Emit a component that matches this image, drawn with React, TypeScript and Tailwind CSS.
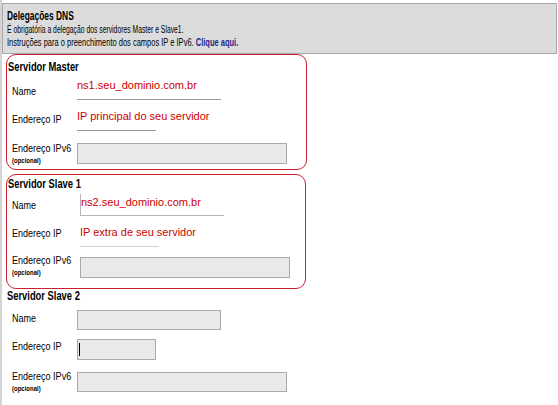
import React from "react";

const AF = "font-['Liberation_Sans',Arial,sans-serif]";

function Sx({ children, s = "scale-x-[0.82]" }: { children: React.ReactNode; s?: string }) {
  return <span className={`inline-block origin-left whitespace-nowrap ${s}`}>{children}</span>;
}

function Label({ text, opcional, mt, w }: { text: string; opcional?: boolean; mt: number; w: string }) {
  return (
    <div className={`${w} shrink-0`} style={{ marginTop: mt }}>
      <div className="text-[11px] leading-[13px] text-black h-[13px]">
        <Sx>{text}</Sx>
      </div>
      {opcional && (
        <div className="text-[8px] leading-[9px] h-[9px] mt-[1px] text-black font-bold">
          <Sx s="scale-x-[0.75]">(opcional)</Sx>
        </div>
      )}
    </div>
  );
}

function Row({ h, children }: { h: number; children: React.ReactNode }) {
  return (
    <div className="flex items-start" style={{ height: h }}>
      {children}
    </div>
  );
}

function GrayInput({ w, h, mt, cursor }: { w: string; h: number; mt: number; cursor?: boolean }) {
  return (
    <div
      className={`${w} border border-[#a9a9a9] bg-[#e9e9e9] flex items-center pl-[1px]`}
      style={{ height: h, marginTop: mt }}
    >
      {cursor && <div className="w-[1px] h-[13px] bg-black" />}
    </div>
  );
}

function Heading({ text, cls }: { text: string; cls: string }) {
  return (
    <div className={`${cls} text-[12px] leading-[14px] h-[14px] font-bold text-black`}>
      <Sx s="scale-x-[0.78]">{text}</Sx>
    </div>
  );
}

export default function App() {
  return (
    <div className={`w-[558px] h-[405px] bg-white overflow-hidden border-l-2 border-[#d4d4d4] ${AF}`}>
      {/* Header */}
      <div className="mt-[3px] w-[555px] h-[51px] border border-[#a8a8a8] bg-[#dcdcdc] pl-[4px] pt-[6px]">
        <div className="text-[12px] leading-[13px] h-[13px] font-bold text-black">
          <Sx s="scale-x-[0.7]">Delegações DNS</Sx>
        </div>
        <div className="text-[10px] leading-[13px] h-[13px] text-black">
          <Sx s="scale-x-[0.68]">É obrigatória a delegação dos servidores Master e Slave1.</Sx>
        </div>
        <div className="text-[10px] leading-[13px] h-[13px] text-black">
          <Sx s="scale-x-[0.75]">
            Instruções para o preenchimento dos campos IP e IPv6.{" "}
            <span className="text-[#1b1f8a] font-bold">Clique aqui.</span>
          </Sx>
        </div>
      </div>

      {/* Servidor Master */}
      <div className="ml-[4px] w-[301px] h-[116px] rounded-[10px] border border-[#c8202c]">
        <Heading text="Servidor Master" cls="pl-[1px] mt-[5px]" />
        <div className="pl-[5px]">
          <Row h={27}>
            <Label text="Name" mt={11} w="w-[65px]" />
            <div className="w-[144px] h-[21px] border-b border-[#9a9a9a] mt-[5px] text-[11px] leading-[13px] text-[#cc0000] whitespace-nowrap">
              ns1.seu_dominio.com.br
            </div>
          </Row>
          <Row h={30}>
            <Label text="Endereço IP" mt={12} w="w-[65px]" />
            <div className="w-[79px] h-[21px] border-b border-[#9a9a9a] mt-[9px] text-[11px] leading-[13px] text-[#cc0000] whitespace-nowrap">
              IP principal do seu servidor
            </div>
          </Row>
          <Row h={34}>
            <Label text="Endereço IPv6" opcional mt={11} w="w-[65px]" />
            <GrayInput w="w-[210px]" h={21} mt={12} />
          </Row>
        </div>
      </div>

      {/* Servidor Slave 1 */}
      <div className="ml-[4px] mt-[4px] w-[300px] h-[115px] rounded-[10px] border border-[#c8202c]">
        <Heading text="Servidor Slave 1" cls="pl-[1px] mt-[2px]" />
        <div className="pl-[5px]">
          <Row h={25}>
            <Label text="Name" mt={8} w="w-[68px]" />
            <div className="w-[144px] h-[22px] border-l border-b border-[#b5b5b5] mt-[3px] pt-[2px] text-[11px] leading-[13px] text-[#cc0000] whitespace-nowrap">
              ns2.seu_dominio.com.br
            </div>
          </Row>
          <Row h={31}>
            <Label text="Endereço IP" mt={11} w="w-[68px]" />
            <div className="w-[79px] h-[21px] border-b border-[#d2d2d2] mt-[10px] text-[11px] leading-[13px] text-[#cc0000] whitespace-nowrap">
              IP extra de seu servidor
            </div>
          </Row>
          <Row h={34}>
            <Label text="Endereço IPv6" opcional mt={7} w="w-[68px]" />
            <GrayInput w="w-[210px]" h={21} mt={10} />
          </Row>
        </div>
      </div>

      {/* Servidor Slave 2 */}
      <div>
        <Heading text="Servidor Slave 2" cls="pl-[5px] mt-[0px]" />
        <div className="pl-[10px]">
          <Row h={27}>
            <Label text="Name" mt={9} w="w-[65px]" />
            <GrayInput w="w-[144px]" h={20} mt={7} />
          </Row>
          <Row h={30}>
            <Label text="Endereço IP" mt={10} w="w-[65px]" />
            <GrayInput w="w-[79px]" h={21} mt={9} cursor />
          </Row>
          <Row h={34}>
            <Label text="Endereço IPv6" opcional mt={10} w="w-[65px]" />
            <GrayInput w="w-[210px]" h={20} mt={12} />
          </Row>
        </div>
      </div>
    </div>
  );
}
